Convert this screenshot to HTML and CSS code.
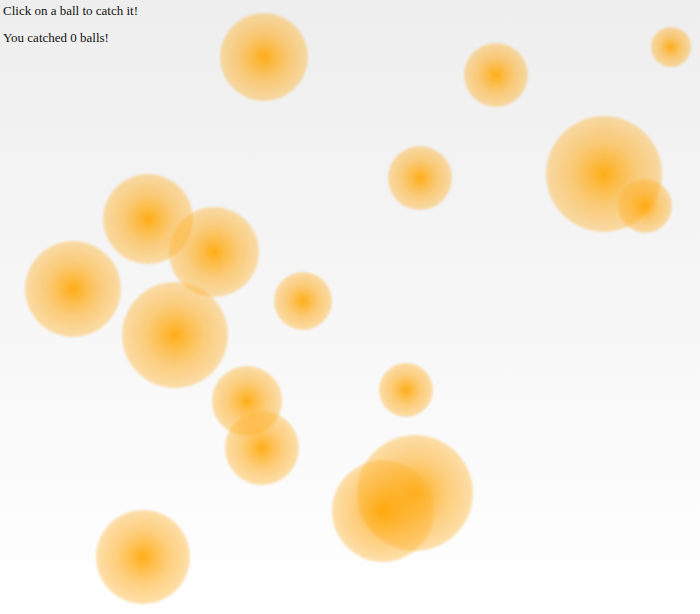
FILE: index.html
```html
<!DOCTYPE html>
<html>
<head>
<meta charset="utf-8">
<title>Catch the balls</title>
<link rel="stylesheet" href="styles.css">
</head>
<body>
<div class="stage">
  <div class="info">
    <div class="line">Click on a ball to catch it!</div>
    <div class="line score">You catched <span class="count">0</span> balls!</div>
  </div>
  <div class="ball" style="left:220px;top:13px;width:88px;height:88px"></div>
  <div class="ball" style="left:464px;top:43px;width:64px;height:64px"></div>
  <div class="ball" style="left:651px;top:27px;width:40px;height:40px"></div>
  <div class="ball" style="left:546px;top:116px;width:116px;height:116px"></div>
  <div class="ball" style="left:618px;top:179px;width:54px;height:54px"></div>
  <div class="ball" style="left:388px;top:146px;width:64px;height:64px"></div>
  <div class="ball" style="left:103px;top:174px;width:90px;height:90px"></div>
  <div class="ball" style="left:169px;top:207px;width:90px;height:90px"></div>
  <div class="ball" style="left:25px;top:241px;width:96px;height:96px"></div>
  <div class="ball" style="left:122px;top:282px;width:106px;height:106px"></div>
  <div class="ball" style="left:274px;top:272px;width:58px;height:58px"></div>
  <div class="ball" style="left:212px;top:366px;width:70px;height:70px"></div>
  <div class="ball" style="left:225px;top:411px;width:74px;height:74px"></div>
  <div class="ball" style="left:379px;top:363px;width:54px;height:54px"></div>
  <div class="ball" style="left:357px;top:435px;width:116px;height:116px"></div>
  <div class="ball" style="left:332px;top:460px;width:102px;height:102px"></div>
  <div class="ball" style="left:96px;top:510px;width:94px;height:94px"></div>
</div>
</body>
</html>
```

FILE: styles.css
```css
html, body {
  margin: 0;
  padding: 0;
  height: 100%;
}
body {
  font-family: "Liberation Serif", "Times New Roman", serif;
  font-size: 13px;
  color: #111;
  background: linear-gradient(to bottom, #eeeeee 0%, #ffffff 100%);
}
.stage {
  position: relative;
  width: 100%;
  height: 100%;
  overflow: hidden;
}
.info {
  padding: 3px 0 0 3px;
}
.line {
  line-height: 15px;
}
.score {
  margin-top: 12px;
}
.ball {
  position: absolute;
  border-radius: 50%;
  background: radial-gradient(circle closest-side, rgba(255,165,0,0.92) 0%, rgba(255,168,10,0.78) 20%, rgba(255,172,30,0.58) 55%, rgba(255,178,45,0.45) 90%, rgba(255,180,50,0.38) 100%);
  filter: blur(0.8px);
}
```
